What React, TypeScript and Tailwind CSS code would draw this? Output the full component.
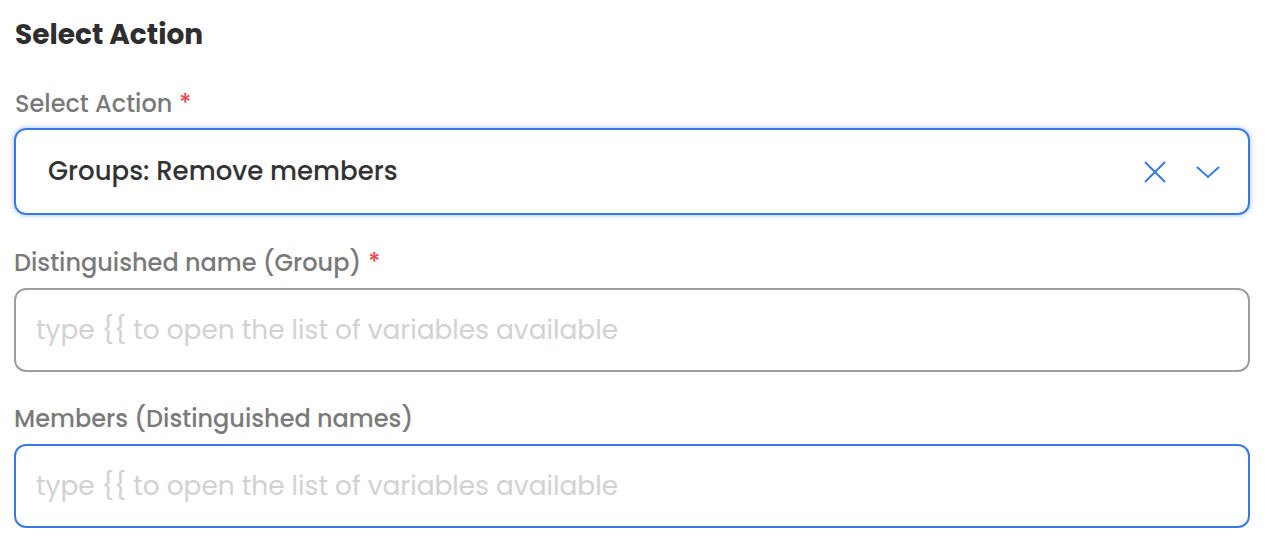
import React from 'react';

const Label: React.FC<{ text: string; required?: boolean; className?: string }> = ({ text, required, className }) => (
    <div className={`text-[24px] leading-[28px] font-medium text-[#7a7a7a] ${className ?? ''}`}>
        {text}
        {required && <span className="text-[#e5484d] ml-[7px]">*</span>}
    </div>
);

const App: React.FC = () => {
    const placeholder = 'type {{ to open the list of variables available';

    return (
        <div className="w-[1266px] h-[552px] bg-white px-[14px] font-['Poppins','Open_Sans',sans-serif]">
            <h2 className="pt-[20px] pl-px text-[28px] leading-[30px] font-bold text-[#2e2e2e]">Select Action</h2>

            {/* Action select */}
            <Label text="Select Action" required className="mt-[40px] pl-px" />
            <div className="mt-[10px] h-[87px] w-[1236px] flex items-center rounded-[12px] border-2 border-[#3b78e7] shadow-[0_0_4px_1px_rgba(59,120,231,0.35)] pl-[32px] pr-[28px]">
                <span className="flex-1 text-[26px] text-[#333333] font-medium">Groups: Remove members</span>
                <svg width="22" height="22" viewBox="0 0 22 22" className="mr-[30px]">
                    <path d="M1 1 L21 21 M21 1 L1 21" stroke="#3b78e7" strokeWidth="2" fill="none" />
                </svg>
                <svg width="24" height="14" viewBox="0 0 24 14">
                    <path d="M1 2 L12 12 L23 2" stroke="#3b78e7" strokeWidth="2" fill="none" />
                </svg>
            </div>

            {/* Group DN */}
            <Label text="Distinguished name (Group)" required className="mt-[34px]" />
            <div className="mt-[11px] h-[84px] w-[1236px] flex items-center rounded-[12px] border-2 border-[#9e9e9e] pl-[20px]">
                <span className="text-[26.4px] text-[#d2d2d2]">{placeholder}</span>
            </div>

            {/* Members */}
            <Label text="Members (Distinguished names)" className="mt-[33px]" />
            <div className="mt-[11px] h-[84px] w-[1236px] flex items-center rounded-[12px] border-2 border-[#3b78e7] pl-[20px]">
                <span className="text-[26.4px] text-[#d2d2d2]">{placeholder}</span>
            </div>
        </div>
    );
};

export default App;
